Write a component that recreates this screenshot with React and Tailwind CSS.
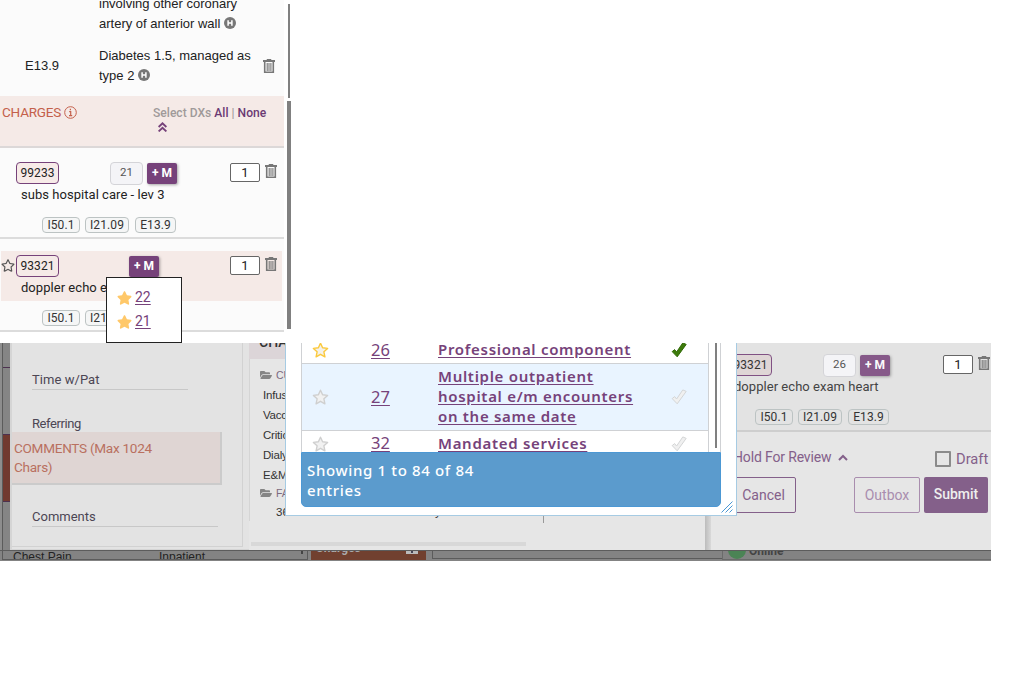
import React from 'react';
import { FaFolderOpen, FaStar, FaRegStar } from 'react-icons/fa';

const ROBOTO = "font-[Roboto,'Liberation_Sans',sans-serif]";
const ARIAL = "font-['Liberation_Sans',Arial,sans-serif]";

function Trash({ className = '' }) {
  return (
    <svg className={`shrink-0 ${className}`} width="12" height="14" viewBox="0 0 12 14" fill="none" stroke="#777">
      <path d="M4 1V.5h4V1" strokeWidth="1" />
      <path d="M0 2h12" strokeWidth="2" />
      <path d="M1.7 3v10.2h8.6V3" strokeWidth="1.6" />
      <path d="M4.2 4v8M6 4v8M7.9 4v8" strokeWidth="1.1" />
    </svg>
  );
}

function HBadge() {
  return (
    <svg className="ml-1 inline-block align-[-1px]" width="12" height="12" viewBox="0 0 12 12">
      <circle cx="6" cy="6" r="6" fill="#777" />
      <path d="M4.1 3.2v5.6M7.9 3.2v5.6M4.1 6h3.8" stroke="#fff" strokeWidth="1.5" />
    </svg>
  );
}

function Check({ on = false }) {
  return (
    <svg width="16" height="16" viewBox="0 0 16 16" className="shrink-0">
      <path
        d="M1.2 9.6 3.6 7.6l2 2.4L11.8.9 15.2 2.4 6.2 14.8z"
        fill={on ? '#3d7a0c' : '#f0f0f0'}
        stroke={on ? '#2f6a05' : '#d3d5d6'}
        strokeWidth="1"
        strokeLinejoin="round"
      />
    </svg>
  );
}

function Star({ on = false }) {
  return (
    <svg width="17" height="16" viewBox="0 0 17 16" className="shrink-0">
      <path
        d="M8.5 1.2l2.1 4.6 5 .6-3.7 3.4 1 5-4.4-2.5-4.4 2.5 1-5L1.4 6.4l5-.6z"
        fill={on ? '#f4f1ea' : '#f1f1f1'}
        stroke={on ? '#fbc93c' : '#cfcfcf'}
        strokeWidth="1.4"
        strokeLinejoin="round"
      />
    </svg>
  );
}

function Chip({ children, className = '' }) {
  return (
    <span className={`flex h-4 items-center justify-center rounded-[4px] border border-[#bcc3c3] bg-[#f5f6f6] text-[12px] tracking-[0.1px] text-[#333] ${className}`}>
      {children}
    </span>
  );
}

function Chips({ className = '', chip = '' }) {
  return (
    <div className={`flex ${className}`}>
      <Chip className={`w-[38px] ${chip}`}>I50.1</Chip>
      <Chip className={`ml-[5px] w-11 ${chip}`}>I21.09</Chip>
      <Chip className={`ml-[6px] w-[41px] ${chip}`}>E13.9</Chip>
    </div>
  );
}

function Code({ children, className = '' }) {
  return (
    <span className={`flex h-[22px] w-[43px] shrink-0 items-center justify-center rounded-[4px] border border-[#76427a] text-[12px] tracking-[0.1px] text-[#222] ${className}`}>
      {children}
    </span>
  );
}

function AddM({ className = '' }) {
  return (
    <span className={`flex h-[21px] w-[30px] shrink-0 items-center justify-center rounded-[2px] bg-[#76427a] pb-px text-[12px] font-bold text-white shadow-[1px_1px_3px_rgba(0,0,0,.35)] ${className}`}>
      +&nbsp;M
    </span>
  );
}

function Modifier({ children, className = '' }) {
  return (
    <span className={`flex h-[23px] w-[33px] shrink-0 items-center justify-center rounded-[4px] border border-[#d4d4d8] bg-[#f4f4f7] pb-[2px] text-[11.5px] text-[#555] ${className}`}>
      {children}
    </span>
  );
}

function Qty({ className = '' }) {
  return (
    <span className={`flex h-[19px] w-[30px] shrink-0 items-center justify-center rounded-[2px] border border-[#666] bg-white text-[13px] text-[#222] ${className}`}>
      1
    </span>
  );
}

function ChargesPanel() {
  return (
    <section className={`relative flex h-[343px] w-[300px] items-start ${ROBOTO}`}>
      <div className="h-[332px] w-[284px] overflow-hidden bg-[#fbfbfb]">
        <div className={`h-24 overflow-hidden text-[13px] leading-5 text-[#222] ${ARIAL}`}>
          <div className="-mt-[6px] ml-[99px] whitespace-nowrap">
            involving other coronary
            <br />
            artery of anterior wall
            <HBadge />
          </div>
          <div className="mt-3 flex items-center">
            <span className="w-[74px] pl-[25px]">E13.9</span>
            <span className="ml-[25px] w-[164px] whitespace-nowrap">
              Diabetes 1.5, managed as
              <br />
              type 2<HBadge />
            </span>
            <Trash />
          </div>
        </div>
        <header className="flex h-[52px] justify-between border-b-2 border-[#dcd8d8] bg-[#f5eae7] pl-[2px] pt-[6px]">
          <h2 className="flex h-5 items-center text-[13.5px] tracking-[-0.2px] text-[#c4604b]">
            CHARGES
            <svg className="ml-[3px]" width="13" height="13" viewBox="0 0 13 13" fill="none" stroke="#c4604b">
              <circle cx="6.5" cy="6.5" r="5.8" />
              <path d="M5.2 5.6h1.5v4M5 9.6h3.2M6.4 2.8v1.5" strokeWidth="1.2" />
            </svg>
          </h2>
          <div className="w-[131px] text-[12.1px] font-medium leading-5 text-[#a09a9a]">
            <div className="whitespace-nowrap pt-px">
              Select DXs <b className="font-medium text-[#6b3a73]">All</b> | <b className="font-medium text-[#6b3a73]">None</b>
            </div>
            <svg className="-mt-px ml-[5px]" width="9" height="10" viewBox="0 0 9 10" fill="none" stroke="#76427a" strokeWidth="1.9">
              <path d="M.6 5 4.5 1.3 8.4 5M.6 9.4 4.5 5.7 8.4 9.4" />
            </svg>
          </div>
        </header>
        <article className="h-[91px] border-b-2 border-[#dcdcdc] pt-[14px]">
          <div className="flex h-[23px] items-start">
            <Code className="ml-4 bg-[#f7ebe8]">99233</Code>
            <Modifier className="ml-[51px]">21</Modifier>
            <AddM className="ml-1 mt-px" />
            <Qty className="ml-[53px] mt-px" />
            <Trash className="ml-[5px] mt-[2px]" />
          </div>
          <p className="ml-[21px] mt-px text-[13px] leading-[17px] tracking-[0.04px] text-[#222]">subs hospital care - lev 3</p>
          <Chips className="ml-[42px] mt-[14px]" />
        </article>
        <article className="h-[93px] border-b-2 border-[#dcdcdc] pt-[12px]">
          <div className="ml-px h-[50px] w-[281px] bg-[#f5eae7] pt-[4px]">
            <div className="flex h-[23px] items-start">
              <FaRegStar className="mt-1 h-[13px] w-[14px] text-[#555]" />
              <Code className="ml-px">93321</Code>
              <AddM className="ml-[70px] mt-px" />
              <Qty className="ml-[71px] mt-px" />
              <Trash className="ml-[5px] mt-[2px]" />
            </div>
            <p className="ml-5 mt-px text-[13px] leading-[17px] tracking-[0.04px] text-[#222]">doppler echo exam heart</p>
          </div>
          <Chips className="ml-[42px] mt-[9px]" />
        </article>
      </div>
      <div className="w-[10px] pt-1">
        <div className="ml-1 h-[94px] w-[2px] bg-[#808080]" />
        <div className="ml-[3px] mt-[3px] h-[228px] w-1 bg-[#808080]" />
      </div>
      <div className="absolute left-[106px] top-[277px] z-20 flex h-[66px] w-[76px] flex-col border border-[#222] bg-white pl-[10px] pt-[7px]">
        {['22', '21'].map((n) => (
          <div key={n} className="flex h-6 items-center text-[14px] text-[#76427a]">
            <FaStar className="mr-[3px] mt-px h-[14px] w-[15px] text-[#ffc869]" />
            <span className="underline underline-offset-2">{n}</span>
          </div>
        ))}
      </div>
    </section>
  );
}

function Backdrop() {
  return (
    <div className="flex w-[10px] flex-col border-l-2 border-[#8d8d8d]">
      <div className="flex grow flex-col border-l border-[#5b5b5b] bg-[#858585]">
        <div className="h-[25px] border-b border-[#4d3150]" />
        <div className="h-[66px]" />
        <div className="h-[68px] border-y border-[#4d3150] bg-[#71392f]" />
      </div>
    </div>
  );
}

function Visit() {
  return (
    <div className="w-[239px] border-b border-l-2 border-[#d5d5d5] bg-[#e3e3e3] text-[13px] text-[#4c4654]">
      <div className="h-[204px] w-[231px] overflow-hidden border-b border-r border-[#d2d2d2]">
        <div className="ml-5 h-[47px] w-[156px] border-b border-[#c8c8c8] pt-[27px] leading-5 tracking-[0.05px]">Time w/Pat</div>
        <div className="ml-5 h-[42px] pt-[24px] leading-5 tracking-[-0.4px]">Referring</div>
        <div className="h-[53px] w-[210px] whitespace-nowrap border-b-2 border-r-2 border-[#cbcbcb] bg-[#dfd5d3] pl-[2px] pt-[7px] text-[13.6px] leading-[19px] tracking-[-0.3px] text-[#b9705f]">
          COMMENTS (Max 1024
          <br />
          Chars)
        </div>
        <div className="ml-5 h-[42px] w-[186px] border-b border-[#c8c8c8] pt-[22px] leading-5">Comments</div>
      </div>
    </div>
  );
}

function ChargeList() {
  return (
    <div className={`flex w-[456px] flex-col overflow-hidden bg-[#e6e6e6] text-[11.5px] text-[#333] ${ARIAL}`}>
      <div className="h-4 shrink-0 overflow-hidden bg-[#dcd5d8] pl-[10px] text-[14px] leading-5">
        <div className={`-mt-[11px] font-medium ${ROBOTO}`}>CHARGES</div>
      </div>
      <div className="flex h-[162px] flex-col border-l border-[#d5d5d5] pl-[10px] pt-[6px] leading-5">
        <div className="flex items-center text-[10.5px] leading-5 text-[#7c6a80]"><FaFolderOpen className="mr-[4px] h-3 w-3 text-[#858585]" />CUSTOM</div>
        <div className="pl-[3px] tracking-[-0.2px]">Infusion</div>
        <div className="pl-[3px] tracking-[-0.2px]">Vaccines</div>
        <div className="pl-[3px] tracking-[-0.2px]">Critical care</div>
        <div className="pl-[3px] tracking-[-0.2px]">Dialysis</div>
        <div className="pl-[3px] tracking-[-0.2px]">E&amp;M</div>
        <div className="-mt-px flex h-[18px] items-center text-[10.5px] text-[#7c6a80]"><FaFolderOpen className="mr-[4px] h-3 w-3 text-[#858585]" />FAVORITES</div>
        <div className="flex pl-4"><span className="w-[159px]">36</span><span>y</span></div>
      </div>
      <div className="ml-[2px] mt-[21px] h-1 w-[275px] bg-[#d8d8d8]" />
    </div>
  );
}

function Review() {
  return (
    <div className="w-[280px] overflow-hidden bg-[#e6e6e6] text-[#444]">
      <div className="h-[89px] border-b-2 border-[#cecece] bg-[#e3e3e3] pt-[11px]">
        <div className="flex h-[23px] items-start">
          <Code className="ml-[18px] bg-[#dfd5d5] opacity-90">93321</Code>
          <Modifier className="ml-[51px] border-[#c5c5c8] bg-[#dedee1]">26</Modifier>
          <AddM className="ml-1 mt-px opacity-85" />
          <Qty className="ml-[53px] mt-px bg-[#e4e4e4]" />
          <Trash className="ml-[5px] mt-[2px]" />
        </div>
        <p className="ml-[23px] mt-px text-[13px] leading-[17px] tracking-[0.04px]">doppler echo exam heart</p>
        <Chips className="ml-11 mt-[14px]" chip="bg-transparent!" />
      </div>
      <div className="flex h-[45px] pt-[15px] text-[#84608a]">
        <div className="ml-[22px] flex h-5 w-[202px] items-center whitespace-nowrap text-[14px] tracking-[-0.15px]">
          Hold For Review
          <svg className="ml-[7px]" width="10" height="7" viewBox="0 0 10 7" fill="none" stroke="#84608a" strokeWidth="2">
            <path d="M1 6 5 2l4 4" />
          </svg>
        </div>
        <div className="mt-[2px] flex h-5 items-center whitespace-nowrap text-[14.7px]">
          <span className="mr-[5px] h-4 w-4 shrink-0 rounded-[1px] border-2 border-[#8b8b8b]" />
          <span className="pt-px">Draft</span>
        </div>
      </div>
      <div className="flex h-9 text-[14px] text-[#84608a]">
        <span className="ml-5 flex w-[65px] items-center justify-center rounded-[2px] border border-[#84608a]">Cancel</span>
        <span className="ml-[58px] flex w-[66px] items-center justify-center rounded-[2px] border border-[#a98dae] text-[#a98dae]">Outbox</span>
        <span className="ml-1 flex w-16 items-center justify-center rounded-[2px] bg-[#84608a] pb-px font-medium text-[#eee]">Submit</span>
      </div>
    </div>
  );
}

function BottomStrip() {
  return (
    <div className={`flex h-[11px] overflow-hidden border-t border-[#5c5c5c] bg-[#838383] text-[12px] leading-[14px] text-[#222] ${ARIAL}`}>
      <div className="ml-[2px] flex h-[9px] w-[306px] overflow-hidden border-b border-l border-r border-[#5b5b5b] pl-[10px]">
        <span className="-mt-px w-[146px]">Chest Pain</span>
        <span className="-mt-px w-[142px]">Inpatient</span>
        <span className="h-[3px] w-[2px] bg-[#444]" />
      </div>
      <div className="ml-[3px] flex h-[9px] w-[115px] overflow-hidden bg-[#71402f] pl-[5px] font-bold text-[#aaa]">
        <span className={`-mt-[10px] w-[90px] ${ROBOTO}`}>Charges</span>
        <svg width="12" height="4" viewBox="0 0 12 4">
          <path d="M0 0h12v3H0z" fill="#bbb" />
          <path d="M6 0v2" stroke="#445" strokeWidth="2" />
        </svg>
      </div>
      <div className="ml-[6px] h-2 w-[290px] border-b border-l border-[#5b5b5b]" />
      <div className="flex h-[9px] grow border-b border-l border-[#6b6b6b] pl-[5px]">
        <span className="-mt-[10px] h-[18px] w-[18px] shrink-0 rounded-full bg-[#4b8455]" />
        <span className={`-mt-[7px] ml-[3px] text-[12px] font-bold text-[#444] ${ROBOTO}`}>Online</span>
      </div>
    </div>
  );
}

function Row({ code, children, on = false, className = '' }) {
  return (
    <div className={`flex items-center border-b border-[#cfd1d4] leading-5 text-[#76427a] ${className}`}>
      <span className="w-[69px] pl-[10px]"><Star on={on} /></span>
      <span className="w-[67px] pb-px text-[16.5px] underline underline-offset-2">{code}</span>
      <span className="w-[233px] whitespace-nowrap pb-[2px] text-[15px] font-semibold tracking-[0.7px] underline underline-offset-2">{children}</span>
      <Check on={on} />
    </div>
  );
}

function ModifierDialog() {
  return (
    <div className="absolute left-[285px] top-0 z-10 h-[173px] w-[452px] border-x border-b border-[#a6cbe3] bg-white pl-[15px] font-['Noto_Sans','Open_Sans',sans-serif]">
      <div className="flex h-[109px]">
        <div className="h-[109px] w-[408px] overflow-hidden border-x border-[#cfd1d4]">
          <Row code="26" on className="-mt-[6px] h-[27px]">Professional component</Row>
          <Row code="27" className="h-[67px] bg-[#e9f4ff]">
            Multiple outpatient
            <br />
            hospital e/m encounters
            <br />
            on the same date
          </Row>
          <Row code="32" className="h-[26px]">Mandated services</Row>
        </div>
        <div className="ml-[6px] h-[105px] w-[2px] bg-[#808080]" />
        <div className="ml-[3px] w-px bg-[#cfd1d4]" />
      </div>
      <footer className="h-[55px] w-[420px] rounded-b-[5px] border border-[#4c98d4] bg-[#5b9bcd] pl-[5px] pt-[7px] text-[15px] font-medium leading-5 tracking-[0.65px] text-white">
        Showing 1 to 84 of 84
        <br />
        entries
      </footer>
      <svg className="absolute bottom-[2px] right-[3px]" width="12" height="12" viewBox="0 0 12 12" stroke="#4c98d4">
        <path d="M.5 11.5 11.5.5M4.5 11.5l7-7M8.5 11.5l3-3" />
      </svg>
    </div>
  );
}

export default function App() {
  return (
    <main className="h-[682px] w-[1034px] overflow-hidden bg-white">
      <ChargesPanel />
      <section className={`relative h-[218px] w-[991px] overflow-hidden ${ROBOTO}`}>
        <div className="flex h-[207px]">
          <Backdrop />
          <Visit />
          <ChargeList />
          <div className="w-[6px] bg-gradient-to-r from-[#bcbcbc] to-[#d9d9d9]" />
          <Review />
        </div>
        <BottomStrip />
        <ModifierDialog />
        <div className="absolute left-[543px] top-[173px] h-[7px] w-px bg-[#999]" />
      </section>
    </main>
  );
}
